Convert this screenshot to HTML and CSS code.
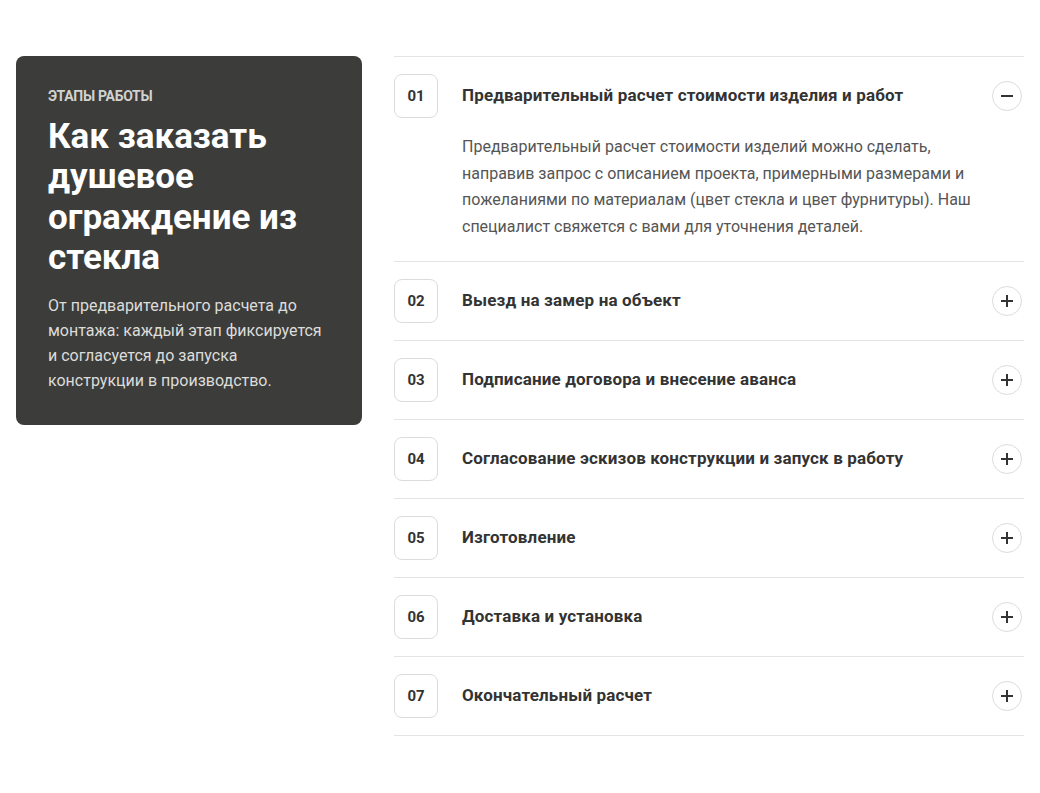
FILE: index.html
```html
<!DOCTYPE html>
<html lang="ru">
<head>
    <meta charset="UTF-8">
    <meta name="viewport" content="width=device-width, initial-scale=1.0">
    <title>Этапы работы</title>
    <link rel="stylesheet" href="styles.css">
</head>
<body>

    <section class="steps">
        <div class="intro">
            <div class="intro-label">Этапы работы</div>
            <h2>Как заказать душевое ограждение из стекла</h2>
            <p>От предварительного расчета до монтажа: каждый этап фиксируется и согласуется до запуска конструкции в производство.</p>
        </div>

        <div class="accordion">
            <div class="item open">
                <div class="item-head">
                    <span class="num">01</span>
                    <span class="title">Предварительный расчет стоимости изделия и работ</span>
                    <button class="toggle" aria-label="Свернуть">
                        <svg width="14" height="14" viewBox="0 0 14 14"><path d="M1 7h12" stroke="#333" stroke-width="2"/></svg>
                    </button>
                </div>
                <div class="item-body">
                    Предварительный расчет стоимости изделий можно сделать, направив запрос с описанием проекта, примерными размерами и пожеланиями по материалам (цвет стекла и цвет фурнитуры). Наш специалист свяжется с вами для уточнения деталей.
                </div>
            </div>

            <div class="item">
                <div class="item-head">
                    <span class="num">02</span>
                    <span class="title">Выезд на замер на объект</span>
                    <button class="toggle" aria-label="Развернуть">
                        <svg width="14" height="14" viewBox="0 0 14 14"><path d="M1 7h12M7 1v12" stroke="#333" stroke-width="2"/></svg>
                    </button>
                </div>
            </div>

            <div class="item">
                <div class="item-head">
                    <span class="num">03</span>
                    <span class="title">Подписание договора и внесение аванса</span>
                    <button class="toggle" aria-label="Развернуть">
                        <svg width="14" height="14" viewBox="0 0 14 14"><path d="M1 7h12M7 1v12" stroke="#333" stroke-width="2"/></svg>
                    </button>
                </div>
            </div>

            <div class="item">
                <div class="item-head">
                    <span class="num">04</span>
                    <span class="title">Согласование эскизов конструкции и запуск в работу</span>
                    <button class="toggle" aria-label="Развернуть">
                        <svg width="14" height="14" viewBox="0 0 14 14"><path d="M1 7h12M7 1v12" stroke="#333" stroke-width="2"/></svg>
                    </button>
                </div>
            </div>

            <div class="item">
                <div class="item-head">
                    <span class="num">05</span>
                    <span class="title">Изготовление</span>
                    <button class="toggle" aria-label="Развернуть">
                        <svg width="14" height="14" viewBox="0 0 14 14"><path d="M1 7h12M7 1v12" stroke="#333" stroke-width="2"/></svg>
                    </button>
                </div>
            </div>

            <div class="item">
                <div class="item-head">
                    <span class="num">06</span>
                    <span class="title">Доставка и установка</span>
                    <button class="toggle" aria-label="Развернуть">
                        <svg width="14" height="14" viewBox="0 0 14 14"><path d="M1 7h12M7 1v12" stroke="#333" stroke-width="2"/></svg>
                    </button>
                </div>
            </div>

            <div class="item">
                <div class="item-head">
                    <span class="num">07</span>
                    <span class="title">Окончательный расчет</span>
                    <button class="toggle" aria-label="Развернуть">
                        <svg width="14" height="14" viewBox="0 0 14 14"><path d="M1 7h12M7 1v12" stroke="#333" stroke-width="2"/></svg>
                    </button>
                </div>
            </div>
        </div>
    </section>

</body>
</html>
```

FILE: styles.css
```css
body {
    margin: 0;
    font-family: Roboto, 'Liberation Sans', sans-serif;
    background: #fff;
    color: #333;
}

.steps {
    display: grid;
    grid-template-columns: 346px 1fr;
    gap: 32px;
    align-items: start;
    padding: 56px 16px;
}

/* dark intro card */
.intro {
    background-color: #3c3d3a;
    border-radius: 8px;
    padding: 32px;
    color: #fff;
}

.intro-label {
    font-size: 14px;
    font-weight: 700;
    text-transform: uppercase;
    letter-spacing: -0.3px;
    color: #d2d2d0;
    line-height: 16px;
}

.intro h2 {
    font-size: 35px;
    line-height: 40.3px;
    font-weight: 700;
    margin: 13px 0 15px;
}

.intro p {
    font-size: 16px;
    line-height: 25px;
    color: #dcdcda;
    margin: 0;
}

/* accordion */
.accordion {
    border-top: 1px solid #e4e4e4;
}

.item {
    border-bottom: 1px solid #e4e4e4;
    padding: 17px 0;
}

.item.open {
    padding-bottom: 21px;
}

.item-head {
    display: flex;
    align-items: center;
    gap: 24px;
}

.num {
    flex: none;
    width: 42px;
    height: 42px;
    border: 1px solid #dcdcdc;
    border-radius: 8px;
    display: flex;
    align-items: center;
    justify-content: center;
    font-size: 15px;
    font-weight: 700;
    color: #333;
}

.title {
    flex: 1;
    font-size: 17px;
    font-weight: 700;
    letter-spacing: 0.15px;
    color: #333;
    margin-top: -2px;
}

.toggle {
    flex: none;
    width: 30px;
    height: 30px;
    margin-right: 2px;
    border: 1px solid #dcdcdc;
    border-radius: 50%;
    background: #fff;
    padding: 0;
    display: flex;
    align-items: center;
    justify-content: center;
    cursor: pointer;
}

.item-body {
    margin: 16px 0 0 68px;
    max-width: 520px;
    font-size: 16px;
    line-height: 26.5px;
    color: #555;
}
```
